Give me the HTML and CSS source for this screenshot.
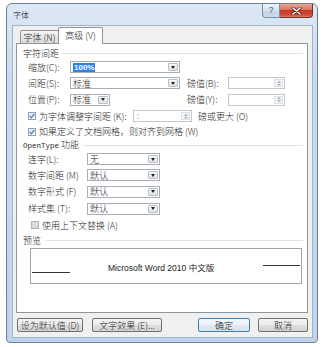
FILE: index.html
```html
<!DOCTYPE html>
<html lang="zh">
<head>
<meta charset="utf-8">
<link rel="stylesheet" href="styles.css">
</head>
<body>
<div class="window">
  <div class="titlebar">
    <span class="title">字体</span>
    <div class="caption">
      <div class="cap-help">?</div>
      <div class="cap-close">
        <svg width="11" height="8" viewBox="0 0 11 8"><path d="M2 1 L9 7 M9 1 L2 7" stroke="#5a1f18" stroke-width="3" stroke-linecap="round"/><path d="M2 1 L9 7 M9 1 L2 7" stroke="#fff" stroke-width="1.6" stroke-linecap="round"/></svg>
      </div>
    </div>
  </div>
  <div class="client">
    <div class="tabs">
      <div class="tab">字体 (N)</div>
      <div class="tab active">高级 (V)</div>
    </div>
    <div class="panel">
      <div class="group"><span>字符间距</span><i class="rule"></i></div>

      <div class="grid r16">
        <span>缩放(C):</span>
        <div class="combo"><span class="val"><span class="sel">100%</span></span><span class="arrow"><i></i></span></div>
      </div>
      <div class="grid r16">
        <span>间距(S):</span>
        <div class="combo"><span class="val">标准</span><span class="arrow"><i></i></span></div>
        <span></span>
        <span>磅值(B):</span>
        <div class="spin"><span class="arrows"><i class="up"></i><i class="dn"></i></span></div>
      </div>
      <div class="grid r17">
        <span>位置(P):</span>
        <div class="combo narrow"><span class="val">标准</span><span class="arrow"><i></i></span></div>
        <span></span>
        <span>磅值(Y):</span>
        <div class="spin"><span class="arrows"><i class="up"></i><i class="dn"></i></span></div>
      </div>
      <div class="row r16 ind">
        <span class="check on"><svg width="6" height="6" viewBox="0 0 6 6"><path d="M0.8 3 L2.4 4.8 L5.3 1" fill="none" stroke="#5b7fb0" stroke-width="1.3"/></svg></span>
        <span class="ktext">为字体调整字间距 (K):</span>
        <div class="spin kspin"><span class="kval">:</span><span class="arrows"><i class="up"></i><i class="dn"></i></span></div>
        <span class="kafter">磅或更大 (O)</span>
      </div>
      <div class="row r15 ind">
        <span class="check on"><svg width="6" height="6" viewBox="0 0 6 6"><path d="M0.8 3 L2.4 4.8 L5.3 1" fill="none" stroke="#5b7fb0" stroke-width="1.3"/></svg></span>
        <span>如果定义了文档网格，则对齐到网格 (W)</span>
      </div>

      <div class="group"><span><span class="mono">OpenType</span> 功能</span><i class="rule"></i></div>

      <div class="ot r16">
        <span>连字(L):</span>
        <div class="combo"><span class="val">无</span><span class="arrow"><i></i></span></div>
      </div>
      <div class="ot r16">
        <span>数字间距 (M)</span>
        <div class="combo"><span class="val">默认</span><span class="arrow"><i></i></span></div>
      </div>
      <div class="ot r17">
        <span>数字形式 (F)</span>
        <div class="combo"><span class="val">默认</span><span class="arrow"><i></i></span></div>
      </div>
      <div class="ot r17">
        <span>样式集 (T):</span>
        <div class="combo"><span class="val">默认</span><span class="arrow"><i></i></span></div>
      </div>
      <div class="row r16 ctx">
        <span class="check off"></span>
        <span>使用上下文替换 (A)</span>
      </div>

      <div class="group pv"><span>预览</span><i class="rule"></i></div>
      <div class="preview">
        <i class="line left"></i>
        <span class="sample">Microsoft Word 2010 中文版</span>
        <i class="line right"></i>
      </div>
    </div>
    <div class="footer">
      <div class="btn b1">设为默认值 (D)</div>
      <div class="btn b2">文字效果 (E)...</div>
      <div class="btn b3 default">确定</div>
      <div class="btn b4">取消</div>
    </div>
  </div>
</div>
</body>
</html>
```
FILE: styles.css
```css
* { box-sizing: border-box; margin: 0; padding: 0; }
html, body { background: #fff; }
body {
  font-family: "Noto Sans CJK SC", "Liberation Sans", sans-serif;
  font-size: 9px;
  font-weight: 300;
  line-height: 1;
  color: #262626;
}
.window {
  margin: 3px 0 0 6px;
  width: 312px;
  height: 340px;
  border: 1px solid #6c7f94;
  border-radius: 6px 6px 4px 4px;
  background: linear-gradient(#dde8f5, #c9dbef 70px, #bfd4ec);
  padding: 0 4px 4px 5px;
  display: flex;
  flex-direction: column;
}
.titlebar {
  height: 21px;
  display: flex;
  justify-content: space-between;
  align-items: flex-start;
}
.title { font-size: 8px; margin: 7px 0 0 1px; color: #111; }
.caption { display: flex; }
.cap-help {
  width: 18px; height: 14px;
  border: 1px solid #7d8fa5; border-top: none;
  border-radius: 0 0 0 4px;
  background: linear-gradient(#edf3fa, #d6e2f0 50%, #c3d3e7 51%, #cddcee);
  color: #4d5a6a; font-size: 9px; font-family: "Liberation Sans", sans-serif;
  display: flex; align-items: center; justify-content: center;
}
.cap-close {
  width: 33px; height: 14px;
  border: 1px solid #72302a; border-top: none; border-left: none;
  border-radius: 0 0 4px 0;
  background: linear-gradient(#eba492, #d97560 45%, #c63b26 50%, #cc4f37 85%, #dc8167);
  display: flex; align-items: center; justify-content: center;
}
.client {
  flex: 1;
  background: #f0f0f0;
  border: 1px solid #a3b4c7;
  padding: 0 4px 0 3px;
  display: flex;
  flex-direction: column;
}
.tabs {
  height: 18px;
  margin-bottom: -1px;
  padding-left: 4px;
  display: flex;
  align-items: flex-end;
}
.tab {
  width: 39px; height: 13px;
  margin-bottom: 1px;
  border: 1px solid #8e959e; border-bottom: none;
  border-radius: 2px 2px 0 0;
  background: linear-gradient(#f5f5f5, #e6e6e6 50%, #dadada);
  display: flex; align-items: center; justify-content: center;
}
.tab.active {
  width: 45px; height: 17px;
  margin: 0 0 0 -1px;
  background: #fff;
  position: relative; z-index: 1;
  padding-bottom: 2px;
}
.panel {
  height: 270px;
  background: #fff;
  border: 1px solid #8e959e;
  padding-top: 3px;
  display: flex;
  flex-direction: column;
}
.group {
  height: 12px;
  display: flex; align-items: center;
  padding: 0 4px 0 6px;
  gap: 4px;
}
.group.pv { height: 14px; }
.mono { font-family: "Liberation Mono", monospace; font-size: 7.5px; font-weight: 400; }
.rule { flex: 1; height: 1px; background: #dbe2e8; }
.r15 { height: 15px; }
.r16 { height: 16px; }
.r17 { height: 17px; }
.grid {
  display: grid;
  grid-template-columns: 42px 110px 7px 41px 57px;
  align-items: center;
  padding-left: 11px;
}
.row { display: flex; align-items: center; }
.ind { padding-left: 11px; }
.ctx { padding-left: 14px; }
.ot {
  display: grid;
  grid-template-columns: 59px 73px;
  align-items: center;
  padding-left: 11px;
}
.combo {
  height: 12px;
  display: flex;
  border: 1px solid #a6adb6;
  background: #fff;
}
.combo.narrow { width: 40px; }
.combo .val { flex: 1; padding-left: 2px; display: flex; align-items: center; white-space: nowrap; overflow: hidden; }
.sel { background: #2f7fe6; color: #fff; padding: 0 1px; line-height: 9px; font-family: "Liberation Sans", sans-serif; font-size: 8px; font-weight: 700; }
.combo .arrow {
  width: 10px;
  margin: 1px;
  border: 1px solid #b8bec5;
  border-radius: 1px;
  background: linear-gradient(#f6f6f6, #e3e3e3);
  display: flex; align-items: center; justify-content: center;
}
.combo .arrow i {
  width: 0; height: 0;
  border-left: 2.5px solid transparent;
  border-right: 2.5px solid transparent;
  border-top: 3px solid #222;
}
.spin {
  height: 12px;
  display: flex;
  border: 1px solid #c3c8ce;
  background: #fff;
}
.spin .arrows {
  width: 9px;
  margin: 1px 1px 1px auto;
  display: flex; flex-direction: column;
  border: 1px solid #dde1e5;
  background: #f3f4f5;
}
.spin .arrows i { flex: 1; display: flex; align-items: center; justify-content: center; }
.spin .arrows i::after {
  content: "";
  border-left: 2px solid transparent;
  border-right: 2px solid transparent;
}
.spin .arrows .up::after { border-bottom: 2px solid #a8aeb5; }
.spin .arrows .dn::after { border-top: 2px solid #a8aeb5; }
.check {
  width: 8px; height: 8px;
  margin-right: 3px;
  display: flex; align-items: center; justify-content: center;
}
.check.on { border: 1px solid #8ea6bf; background: linear-gradient(#dfe7f0, #fbfcfd); }
.check.off { border: 1px solid #b3b3b3; background: #dcdcdc; margin-right: 3px; }
.ktext { width: 94px; }
.kspin { width: 59px; }
.kval { color: #666; padding-left: 3px; line-height: 10px; }
.kafter { margin-left: 6px; }
.preview {
  height: 36px;
  margin: 1px 5px 0 13px;
  border: 1px solid #a5a5a5;
  display: flex;
  align-items: flex-start;
}
.line { height: 1px; background: #333; }
.line.left { width: 38px; margin: 23px 0 0 1px; }
.line.right { width: 37px; margin: 16px 1px 0 auto; }
.sample {
  margin: 15px 0 0 38px;
  font-family: "Liberation Sans", "Noto Sans CJK SC", sans-serif;
  font-weight: 400;
  font-size: 8.5px;
  color: #222;
}
.footer {
  flex: 1;
  display: flex;
  align-items: flex-start;
  padding-top: 5px;
}
.btn {
  height: 14px;
  border: 1px solid #707070;
  border-radius: 2px;
  background: linear-gradient(#f3f3f3, #ebebeb 50%, #dedede 51%, #d3d3d3);
  display: flex; align-items: center; justify-content: center;
}
.btn.default { border-color: #3c7fb1; background: linear-gradient(#f6f9fc, #eaf1f7 50%, #dfe9f2 51%, #d6e3ef); }
.b1 { width: 66px; margin-left: 1px; }
.b2 { width: 70px; margin-left: 9px; }
.b3 { width: 52px; margin-left: 36px; }
.b4 { width: 50px; margin-left: 8px; }
```
